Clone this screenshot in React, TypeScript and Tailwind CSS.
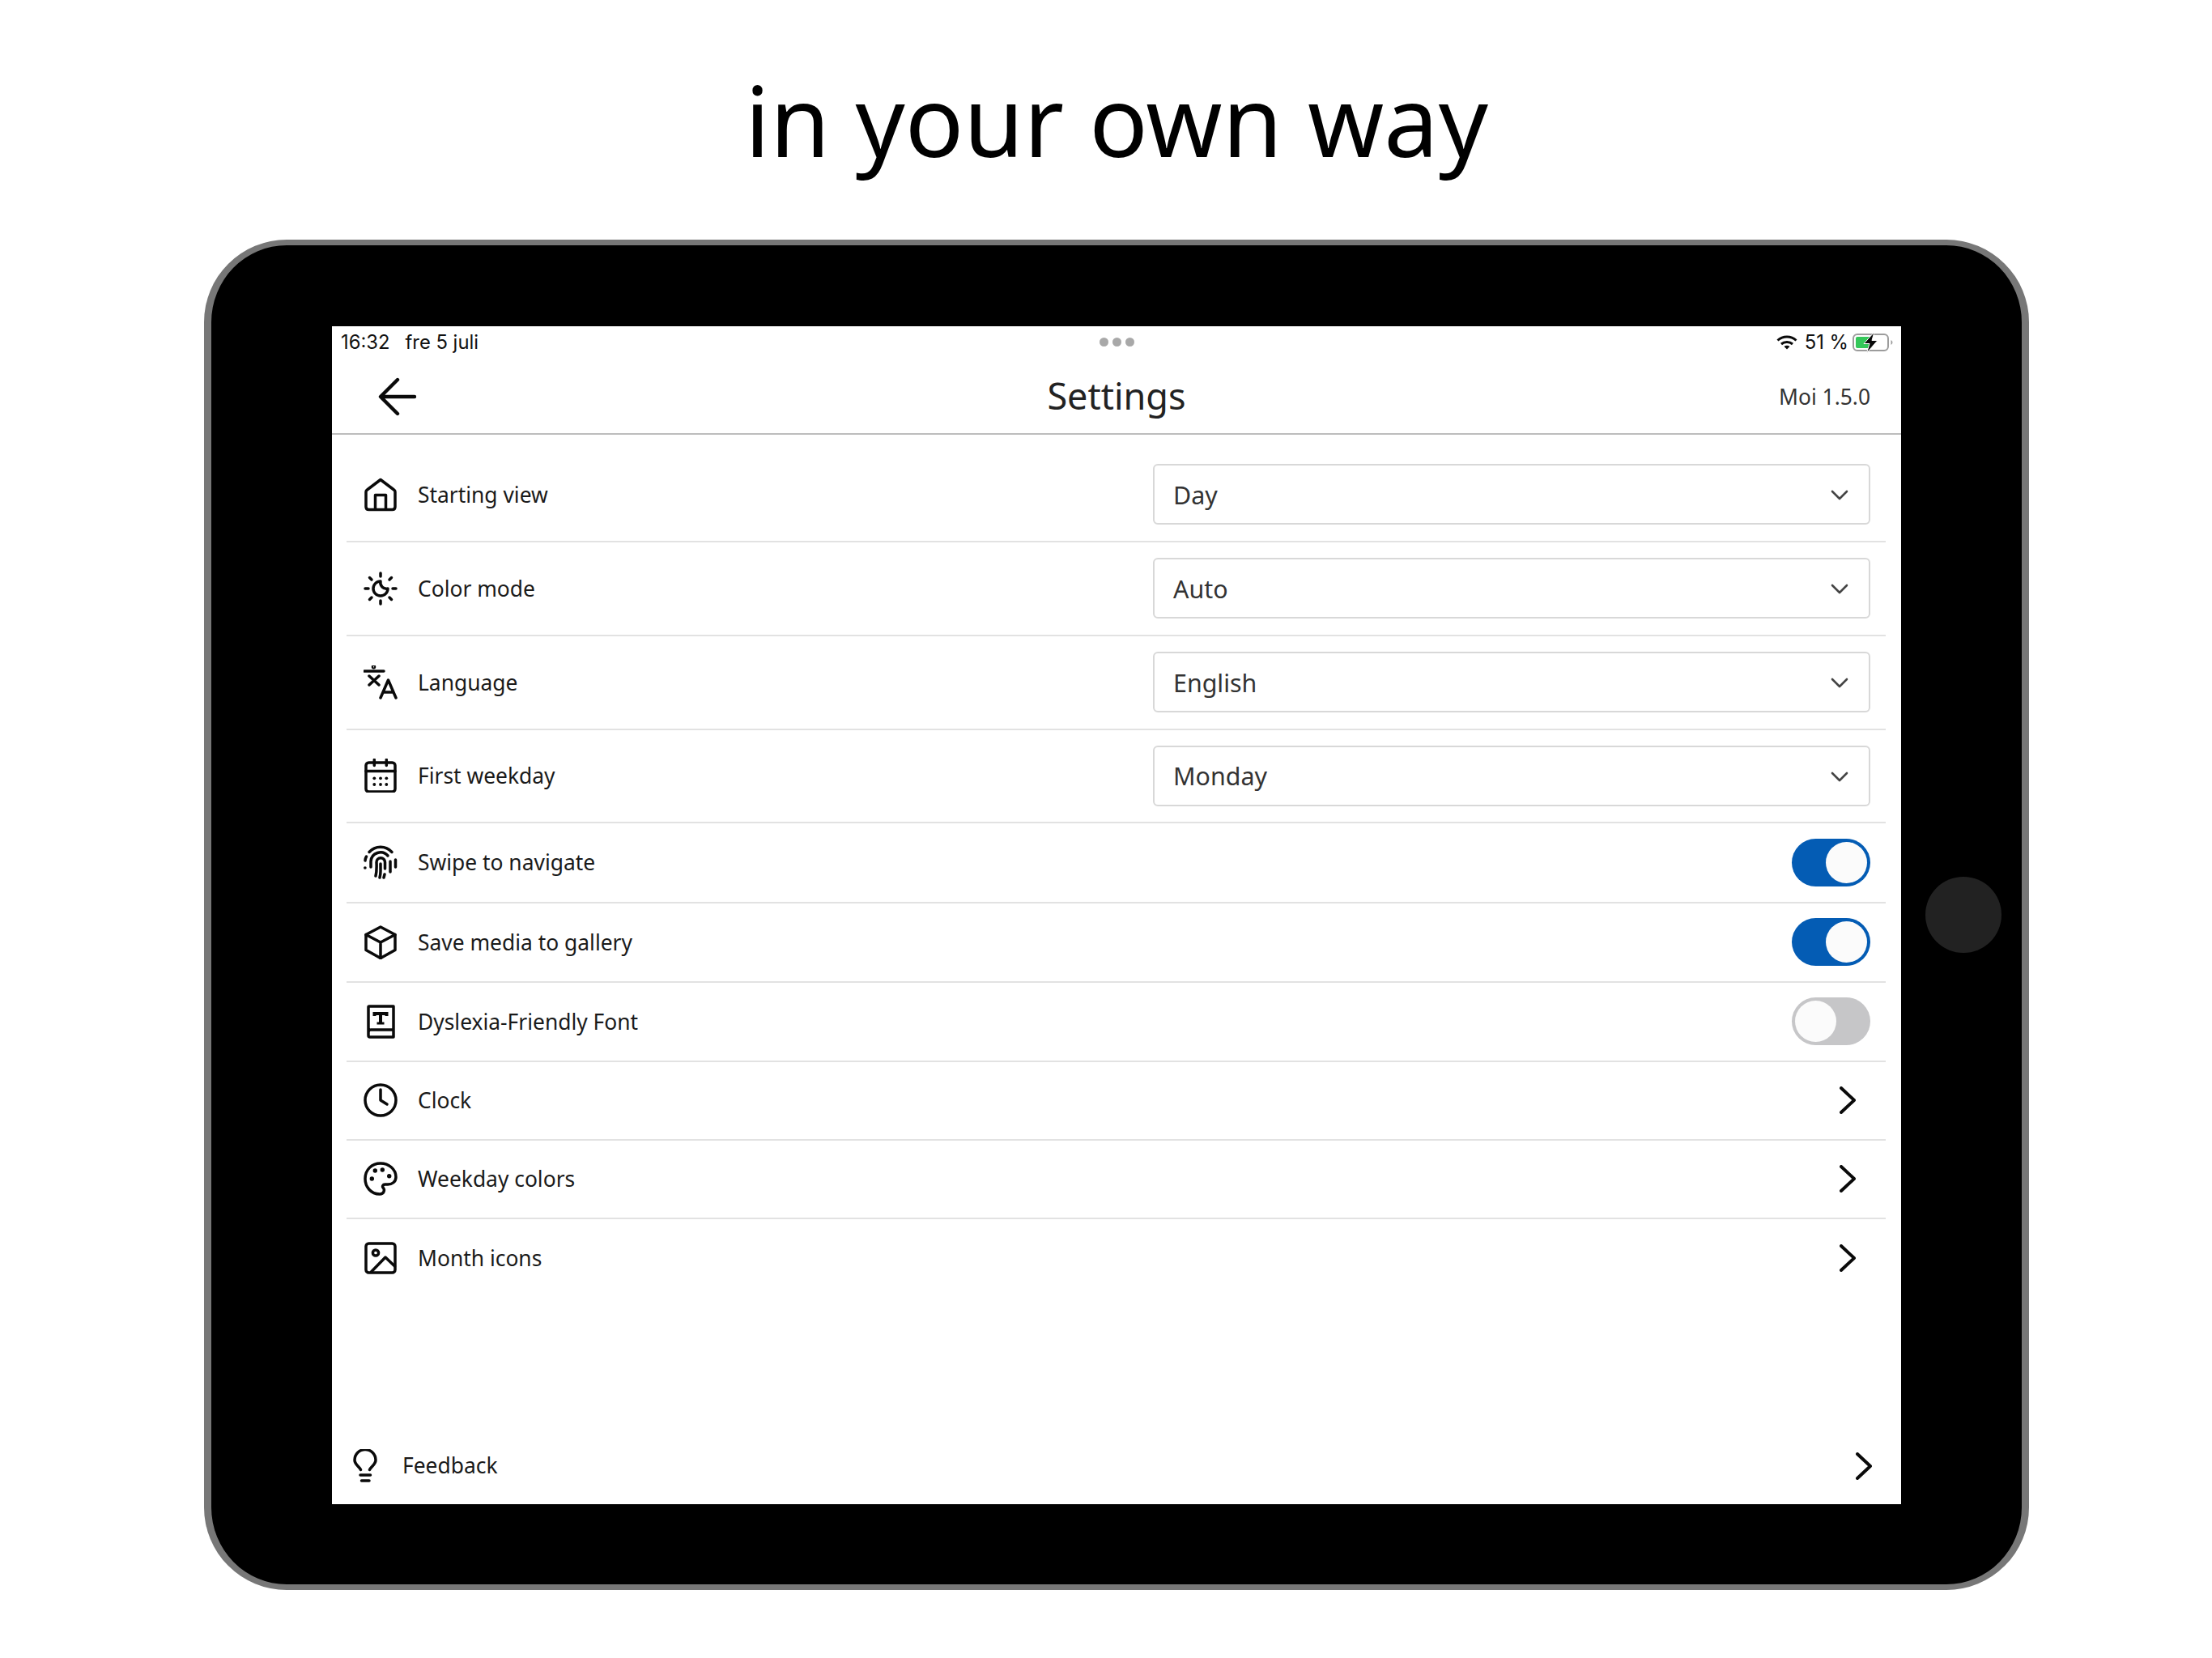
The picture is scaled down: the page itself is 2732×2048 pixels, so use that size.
import React from 'react';

type IconProps = { children: React.ReactNode; size?: number };

function Icon({ children, size = 42 }: IconProps) {
  return (
    <svg
      width={size}
      height={size}
      viewBox={`0 0 ${size} ${size}`}
      fill="none"
      stroke="#0a0a0a"
      strokeWidth={3.5}
      strokeLinecap="round"
      strokeLinejoin="round"
      className="shrink-0"
    >
      {children}
    </svg>
  );
}

const HomeIcon = () => (
  <Icon>
    <path d="M3 17.5Q3 16 4.5 15L21 2.5L37.5 15Q39 16 39 17.5V36Q39 39.5 35.5 39.5H6.5Q3 39.5 3 36Z" />
    <path d="M14.5 39V21.5H27.5V39" />
  </Icon>
);

const SunMoonIcon = () => (
  <Icon>
    <path d="M21 2V6M21 36V40M2 21H6M36 21H40M7.5 7.5L10 10M32 32L34.5 34.5M7.5 34.5L10 32M32 10L34.5 7.5" />
    <path d="M21 12A9 9 0 1 0 30 21A7.5 7.5 0 0 1 21 12Z" />
  </Icon>
);

const TranslateIcon = () => (
  <Icon>
    <path d="M1 7H25M7 13L19 24M19 13L7 24" />
    <circle cx="12.5" cy="1.8" r="1" />
    <path d="M21 40L30.5 18L40 40M24.5 33H36.5" />
  </Icon>
);

const CalendarIcon = () => (
  <Icon>
    <rect x="3" y="5" width="36" height="36" rx="3.5" />
    <path d="M13.3 1.5V8.5M28.3 1.5V8.5M3 15.5H39" />
    <g fill="#0a0a0a" stroke="none">
      <circle cx="13.3" cy="24.3" r="1.9" />
      <circle cx="21" cy="24.3" r="1.9" />
      <circle cx="28.3" cy="24.3" r="1.9" />
      <circle cx="13.3" cy="32" r="1.9" />
      <circle cx="21" cy="32" r="1.9" />
      <circle cx="28.3" cy="32" r="1.9" />
    </g>
  </Icon>
);

const FingerprintIcon = () => (
  <Icon>
    <path d="M7 8.5A19 19 0 0 1 35 8.5" />
    <path d="M2 19Q2.3 16 3.5 14M39.5 18V27M1.8 28H2" />
    <path d="M9 27V20A12 12 0 0 1 30 13M33 20V33" />
    <path d="M15 38Q16.5 32 16 21A5.2 5.2 0 0 1 26.5 21V29M26 36L25 40" />
    <path d="M21 23V32Q21 36 20 40" />
  </Icon>
);

const CubeIcon = () => (
  <Icon>
    <path d="M21 2L39 11.5V30.5L21 40.5L3 30.5V11.5Z" />
    <path d="M3 11.5L21 21L39 11.5M21 21V40.5" />
  </Icon>
);

const BookIcon = () => (
  <Icon>
    <path d="M6 38V3Q6 2 7 2H37V40H8Q6 40 6 38ZM6 34Q6 31 9 31H37" />
    <path d="M13.5 14V11H28.5V14M21 11V22" strokeWidth={4} strokeLinecap="butt" strokeLinejoin="miter" />
    <path d="M16.5 23H25.5" strokeWidth={3} strokeLinecap="butt" />
  </Icon>
);

const ClockIcon = () => (
  <Icon>
    <circle cx="21" cy="21" r="19" />
    <path d="M21 8V21L29 26" />
  </Icon>
);

const PaletteIcon = () => (
  <Icon>
    <path d="M21 2C31 2 40 9 40 19C40 25 35 28 30 28H26.5C24 28 22.5 30.5 24.5 32.5C26.5 35 25 40 20 40C9 40 2 31 2 21C2 10 10 2 21 2Z" />
    <g fill="#0a0a0a" stroke="none">
      <circle cx="10.3" cy="21" r="2.7" />
      <circle cx="14.3" cy="11" r="2.7" />
      <circle cx="23.3" cy="10" r="2.7" />
      <circle cx="31.7" cy="17.7" r="2.7" />
    </g>
  </Icon>
);

const ImageIcon = () => (
  <Icon>
    <rect x="3" y="3" width="36" height="36" rx="3.5" />
    <circle cx="15" cy="14.5" r="3.6" />
    <path d="M9.5 38L27 20L38.5 31" />
  </Icon>
);

const BulbIcon = () => (
  <Icon>
    <path d="M15.5 25.5C13.5 21 8 19 8 13.5A13 13 0 0 1 34 13.5C34 19 28.5 21 26.5 25.5" />
    <path d="M15 32H27.5M16.5 39H26" />
  </Icon>
);

function ChevronRight() {
  return (
    <svg width="20" height="34" viewBox="0 0 20 34" fill="none" stroke="#0a0a0a" strokeWidth={4} strokeLinecap="round" strokeLinejoin="round">
      <path d="M2 2L18 17L2 32" />
    </svg>
  );
}

function ChevronDown() {
  return (
    <svg width="22" height="13" viewBox="0 0 22 13" fill="none" stroke="#444444" strokeWidth={2.6} strokeLinecap="round" strokeLinejoin="round">
      <path d="M2 2L11 11L20 2" />
    </svg>
  );
}

function Toggle({ on }: { on: boolean }) {
  return (
    <div
      className={
        on
          ? 'flex h-[59px] w-[97px] items-center justify-end rounded-full bg-[#045cb4] pr-[4px]'
          : 'flex h-[59px] w-[97px] items-center justify-start rounded-full bg-[#c6c6c8] pl-[4px]'
      }
    >
      <div className="h-[51px] w-[51px] rounded-full bg-[#fbfbfb]" />
    </div>
  );
}

function Select({ value }: { value: string }) {
  return (
    <div className="flex h-[75px] w-[886px] items-center justify-between rounded-[6px] border-2 border-[#d8d8d8] pl-[23px] pr-[25px] pt-[2px] text-[30.4px] text-[#333333]">
      <span>{value}</span>
      <ChevronDown />
    </div>
  );
}

type Row = {
  label: string;
  icon: React.ReactNode;
  height: string;
  select?: string;
  toggle?: boolean;
};

const rows: Row[] = [
  { label: 'Starting view', icon: <HomeIcon />, height: 'h-[116px]', select: 'Day' },
  { label: 'Color mode', icon: <SunMoonIcon />, height: 'h-[116px]', select: 'Auto' },
  { label: 'Language', icon: <TranslateIcon />, height: 'h-[116px]', select: 'English' },
  { label: 'First weekday', icon: <CalendarIcon />, height: 'h-[115px]', select: 'Monday' },
  { label: 'Swipe to navigate', icon: <FingerprintIcon />, height: 'h-[99px]', toggle: true },
  { label: 'Save media to gallery', icon: <CubeIcon />, height: 'h-[98px]', toggle: true },
  { label: 'Dyslexia-Friendly Font', icon: <BookIcon />, height: 'h-[98px]', toggle: false },
  { label: 'Clock', icon: <ClockIcon />, height: 'h-[97px]' },
  { label: 'Weekday colors', icon: <PaletteIcon />, height: 'h-[97px]' },
];

function SettingsRow({ row, last }: { row: Row; last?: boolean }) {
  return (
    <div className={`flex ${row.height} items-center justify-between pl-[21px] pr-[19px] ${last ? '' : 'border-b-2 border-[#e2e2e2]'}`}>
      <div className="flex items-center gap-[25px] text-[26.4px] text-[#1a1a1a]">
        {row.icon}
        <span className="pt-[2px]">{row.label}</span>
      </div>
      {row.select && <Select value={row.select} />}
      {row.toggle !== undefined && <Toggle on={row.toggle} />}
      {!row.select && row.toggle === undefined && (
        <div className="mr-[18px]">
          <ChevronRight />
        </div>
      )}
    </div>
  );
}

function StatusBar() {
  return (
    <div className="flex h-[38px] items-center justify-between pl-[11px] pr-[10px] pt-[2px] font-['Inter',sans-serif] text-[23.8px] text-[#111111]">
      <div className="flex w-[400px] gap-[19px]">
        <span>16:32</span>
        <span>fre 5 juli</span>
      </div>
      <div className="flex gap-[5px]">
        <div className="h-[11px] w-[11px] rounded-full bg-[#a8a8a8]" />
        <div className="h-[11px] w-[11px] rounded-full bg-[#a8a8a8]" />
        <div className="h-[11px] w-[11px] rounded-full bg-[#a8a8a8]" />
      </div>
      <div className="flex w-[400px] items-center justify-end gap-[5px]">
        <svg width="26" height="18" viewBox="0 0 26 18" fill="none" stroke="#0a0a0a" strokeWidth={3} className="mr-[4px]">
          <path d="M1.5 6.5C8 0.5 18 0.5 24.5 6.5" />
          <path d="M6 11C10 7.5 16 7.5 20 11" />
          <path d="M13 17.5L9.5 14Q13 11.5 16.5 14Z" fill="#0a0a0a" stroke="none" />
        </svg>
        <span>51 %</span>
        <svg width="50" height="26" viewBox="0 0 50 26" fill="none">
          <rect x="1" y="3" width="43" height="20" rx="5" stroke="#9c9c9c" strokeWidth={2} />
          <rect x="4" y="6" width="20" height="14" rx="2" fill="#34c759" />
          <path d="M47.5 10V16Q49.5 15 49.5 13T47.5 10Z" fill="#9c9c9c" />
          <path d="M27 0L14 14.5H21L17.5 26L31 10.5H24Z" fill="#0a0a0a" stroke="#ffffff" strokeWidth={1} />
        </svg>
      </div>
    </div>
  );
}

export default function App() {
  return (
    <div className="flex h-[2048px] w-[2732px] flex-col overflow-hidden bg-white pl-[252px] font-['Noto_Sans',sans-serif]">
      <div className="flex h-[296px] w-[2254px] justify-center pt-[62px] text-[120px] leading-[172px] text-black">
        in your own way
      </div>

      <div className="flex h-[1668px] w-[2254px] items-center rounded-[102px] border-x-[9px] border-y-[7px] border-[#777777] bg-black pl-[149px]">
        <div className="flex h-[1455px] w-[1938px] flex-col bg-white">
          <StatusBar />
          <div className="relative flex h-[96px] items-center justify-center border-b-2 border-[#bdbdbd] pt-[3px] text-[45px] text-[#222222]">
            <svg width="48" height="48" viewBox="0 0 48 48" fill="none" stroke="#0a0a0a" strokeWidth={4.4} strokeLinecap="round" strokeLinejoin="round" className="absolute left-[57px] top-[25px]">
              <path d="M45 24H4M24 3L3 24L24 45" />
            </svg>
            Settings
            <span className="absolute right-[38px] top-[30px] text-[26.4px] text-[#333333]">Moi 1.5.0</span>
          </div>

          <div className="ml-[18px] w-[1901px] pt-[17px]">
            {rows.map((row) => (
              <SettingsRow key={row.label} row={row} />
            ))}
            <SettingsRow last row={{ label: 'Month icons', icon: <ImageIcon />, height: 'h-[96px]' }} />
          </div>

          <div className="mt-auto flex h-[94px] items-center justify-between pl-[20px] pr-[36px] text-[26.4px] text-[#1a1a1a]">
            <div className="flex items-center gap-[25px]">
              <BulbIcon />
              <span>Feedback</span>
            </div>
            <ChevronRight />
          </div>
        </div>

        <div className="ml-[30px] h-[94px] w-[94px] rounded-full bg-[#222222]" />
      </div>
    </div>
  );
}
